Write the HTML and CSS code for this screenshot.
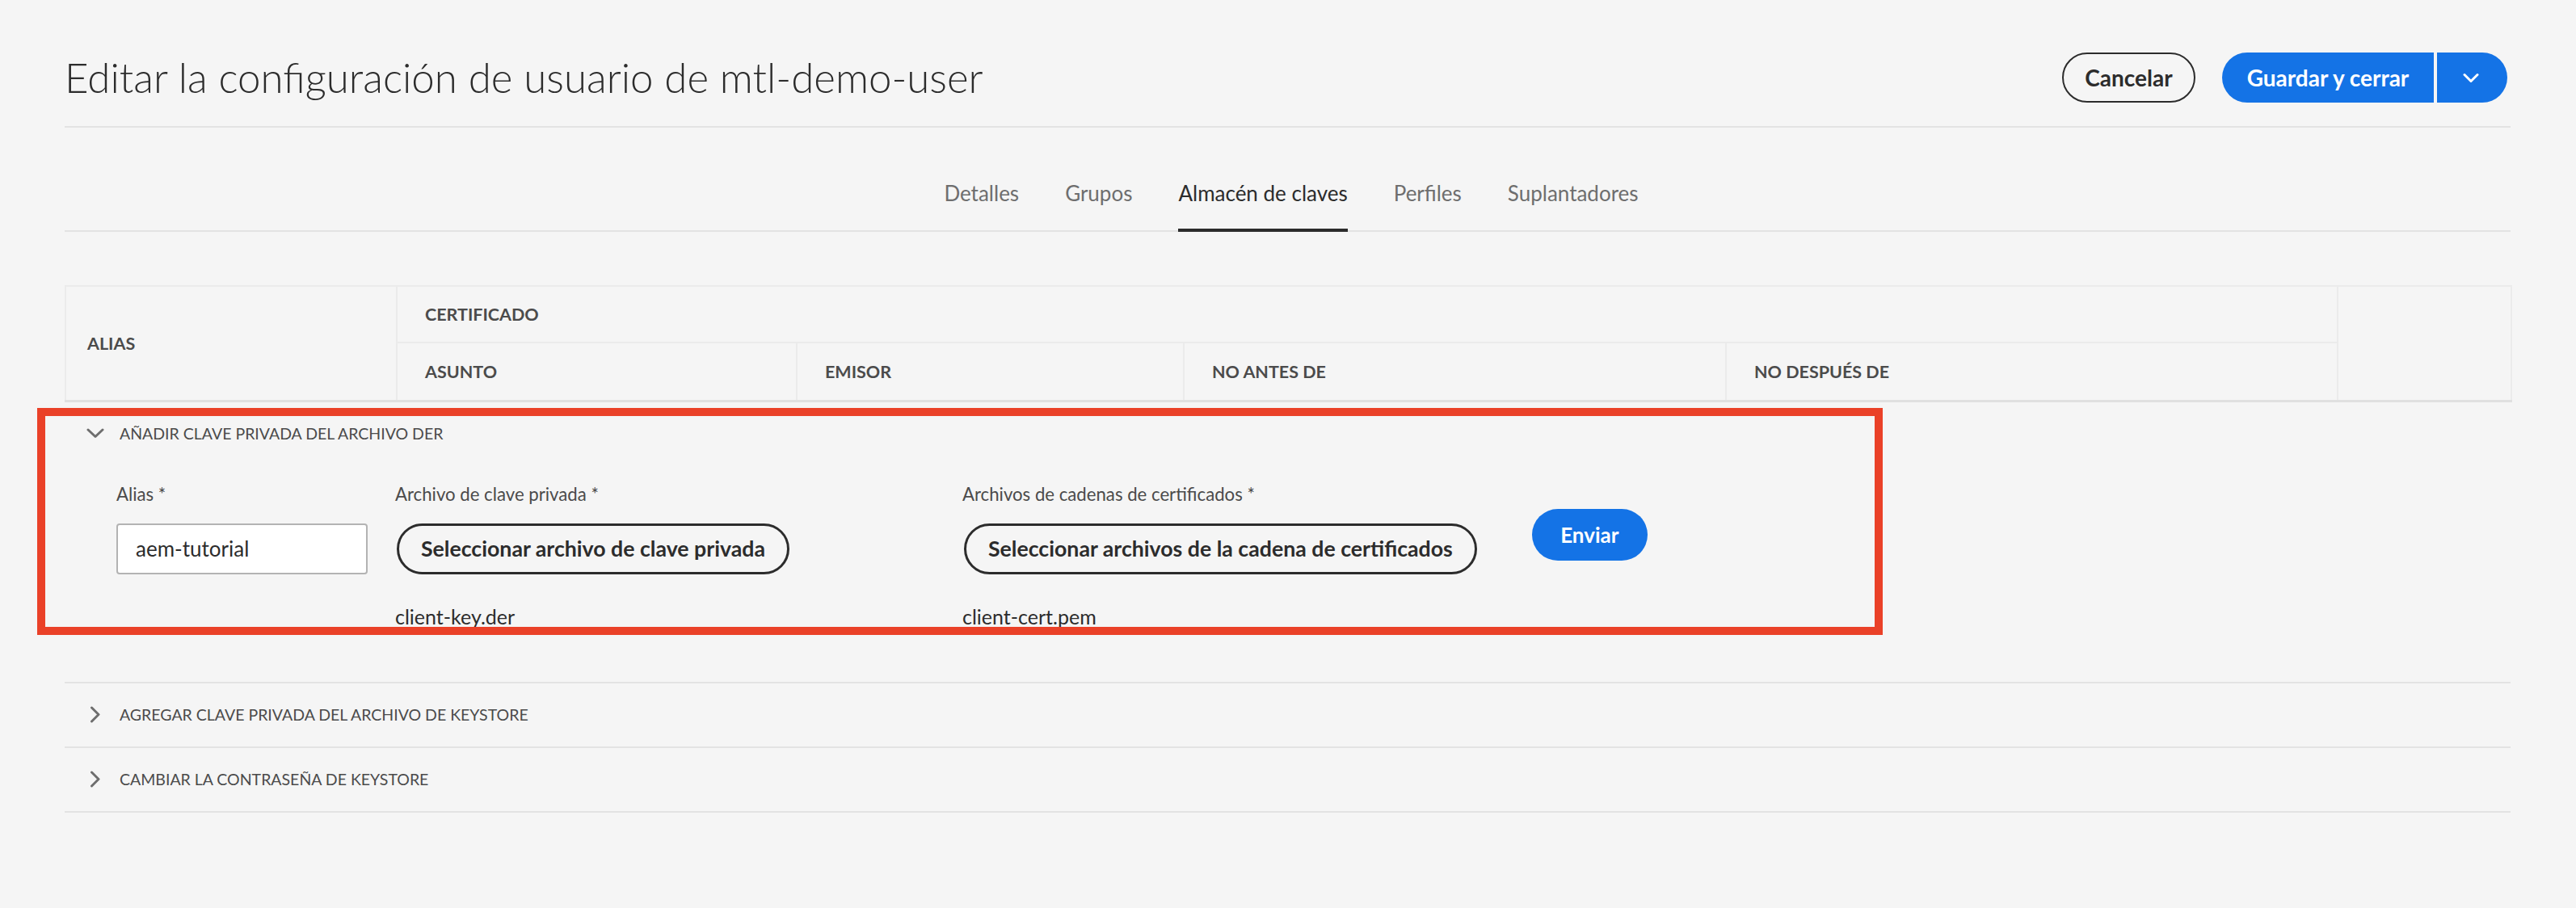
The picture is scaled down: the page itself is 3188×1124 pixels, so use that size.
FILE: index.html
```html
<!DOCTYPE html>
<html lang="es">
<head>
<meta charset="utf-8">
<title>Editar la configuración de usuario de mtl-demo-user</title>
<link rel="stylesheet" href="styles.css">
</head>
<body>
<div class="page">
  <header class="header">
    <h1 class="title">Editar la configuración de usuario de mtl-demo-user</h1>
    <div class="actions">
      <button class="btn btn-outline" type="button">Cancelar</button>
      <div class="split">
        <button class="btn btn-primary split-main" type="button">Guardar y cerrar</button>
        <button class="btn btn-primary split-toggle" type="button" aria-label="Más opciones">
          <svg width="20" height="13" viewBox="0 0 20 13"><path d="M2 2.5 L10 10.5 L18 2.5" fill="none" stroke="#fff" stroke-width="3" stroke-linecap="round" stroke-linejoin="round"/></svg>
        </button>
      </div>
    </div>
  </header>

  <nav class="tabs">
    <a class="tab">Detalles</a>
    <a class="tab">Grupos</a>
    <a class="tab active">Almacén de claves</a>
    <a class="tab">Perfiles</a>
    <a class="tab">Suplantadores</a>
  </nav>

  <table class="keys">
    <colgroup>
      <col class="c-alias">
      <col class="c-asunto">
      <col class="c-emisor">
      <col class="c-antes">
      <col class="c-despues">
      <col class="c-extra">
    </colgroup>
    <thead>
      <tr class="r1">
        <th rowspan="2" class="th-alias">ALIAS</th>
        <th colspan="4">CERTIFICADO</th>
        <th rowspan="2"></th>
      </tr>
      <tr class="r2">
        <th>ASUNTO</th>
        <th>EMISOR</th>
        <th>NO ANTES DE</th>
        <th>NO DESPUÉS DE</th>
      </tr>
    </thead>
  </table>

  <section class="acc acc-open">
    <div class="acc-head">
      <span class="chev">
        <svg width="22" height="13" viewBox="0 0 22 13"><path d="M2 2 L11 10.5 L20 2" fill="none" stroke="#6e6e6e" stroke-width="3" stroke-linecap="round" stroke-linejoin="round"/></svg>
      </span>
      <span class="acc-title">AÑADIR CLAVE PRIVADA DEL ARCHIVO DER</span>
    </div>
    <div class="form">
      <div class="field f-alias">
        <label class="label">Alias *</label>
        <div class="input">aem-tutorial</div>
      </div>
      <div class="field f-key">
        <label class="label">Archivo de clave privada *</label>
        <button class="file-btn" type="button">Seleccionar archivo de clave privada</button>
        <div class="filename">client-key.der</div>
      </div>
      <div class="field f-chain">
        <label class="label">Archivos de cadenas de certificados *</label>
        <button class="file-btn" type="button">Seleccionar archivos de la cadena de certificados</button>
        <div class="filename">client-cert.pem</div>
      </div>
      <button class="btn btn-primary submit" type="button">Enviar</button>
    </div>
    <div class="annot"></div>
  </section>

  <section class="acc">
    <div class="acc-head">
      <span class="chev">
        <svg width="14" height="21" viewBox="0 0 14 21"><path d="M2.5 2 L11 10.5 L2.5 19" fill="none" stroke="#6e6e6e" stroke-width="3" stroke-linecap="round" stroke-linejoin="round"/></svg>
      </span>
      <span class="acc-title">AGREGAR CLAVE PRIVADA DEL ARCHIVO DE KEYSTORE</span>
    </div>
  </section>

  <section class="acc">
    <div class="acc-head">
      <span class="chev">
        <svg width="14" height="21" viewBox="0 0 14 21"><path d="M2.5 2 L11 10.5 L2.5 19" fill="none" stroke="#6e6e6e" stroke-width="3" stroke-linecap="round" stroke-linejoin="round"/></svg>
      </span>
      <span class="acc-title">CAMBIAR LA CONTRASEÑA DE KEYSTORE</span>
    </div>
  </section>
</div>
</body>
</html>
```

FILE: styles.css
```css
* { box-sizing: border-box; }

html, body {
  margin: 0;
  padding: 0;
}

body {
  background: #f5f5f5;
  font-family: Lato, "Open Sans", sans-serif;
  color: #2c2c2c;
  width: 3188px;
}

.page {
  padding: 0 81px 60px 80px;
}

/* Header */
.header {
  display: flex;
  align-items: center;
  justify-content: space-between;
  padding: 65px 4px 29px 0;
  border-bottom: 2px solid #e3e3e3;
}

.title {
  margin: 0;
  font-weight: 300;
  font-size: 51px;
  line-height: 62px;
  color: #2c2c2c;
}

.actions {
  display: flex;
  align-items: center;
  gap: 33px;
}

.btn {
  font-family: inherit;
  font-weight: 700;
  font-size: 28px;
  height: 62px;
  border-radius: 31px;
  display: inline-flex;
  align-items: center;
  justify-content: center;
  cursor: pointer;
  margin: 0;
}

.btn-outline {
  background: transparent;
  border: 2px solid #2c2c2c;
  color: #2c2c2c;
  width: 165px;
  padding: 0;
}

.btn-primary {
  background: #1473e6;
  border: none;
  color: #fff;
}

.split {
  display: flex;
  gap: 4px;
}

.split-main {
  border-radius: 31px 0 0 31px;
  width: 262px;
  padding: 0;
}

.split-toggle {
  border-radius: 0 31px 31px 0;
  width: 87px;
  padding: 0 4px 0 0;
}

/* Tabs */
.tabs {
  display: flex;
  justify-content: center;
  align-items: flex-end;
  gap: 57px;
  height: 129px;
  padding-left: 9px;
  border-bottom: 2px solid #e3e3e3;
}

.tab {
  font-size: 26px;
  line-height: 40px;
  color: #6e6e6e;
  padding-bottom: 24px;
  border-bottom: 4px solid transparent;
  margin-bottom: -2px;
}

.tab.active {
  color: #2c2c2c;
  border-bottom-color: #2c2c2c;
}

/* Table */
.keys {
  width: 100%;
  border-collapse: collapse;
  table-layout: fixed;
  margin-top: 66px;
  border-bottom: 3px solid #e0e0e0;
}

.c-alias { width: 410px; }
.c-asunto { width: 495px; }
.c-emisor { width: 479px; }
.c-antes { width: 671px; }
.c-despues { width: 757px; }
.c-extra { width: 215px; }

.keys th {
  border: 2px solid #ebebeb;
  text-align: left;
  font-size: 21.5px;
  font-weight: 700;
  color: #4b4b4b;
  padding: 0 0 0 34px;
  vertical-align: middle;
}

.keys .r1 th { height: 70px; }
.keys .r2 th { height: 72px; }
.keys th.th-alias { padding-left: 26px; }

/* Accordion */
.acc {
  position: relative;
  border-bottom: 2px solid #e3e3e3;
}

.acc-head {
  display: flex;
  align-items: center;
  height: 78px;
  padding-left: 27px;
  gap: 19px;
}

.chev {
  width: 22px;
  display: flex;
  justify-content: center;
  align-items: center;
}

.chev svg { display: block; }

.acc-title {
  font-size: 19.5px;
  color: #4b4b4b;
}

/* Form */
.form {
  display: flex;
  align-items: flex-start;
  padding: 24px 0 66px 64px;
}

.field {
  display: flex;
  flex-direction: column;
  align-items: flex-start;
}

.f-alias { width: 311px; margin-right: 34px; }
.f-key { width: 702px; }

.label {
  font-size: 22.2px;
  line-height: 24px;
  color: #4b4b4b;
  margin-bottom: 24px;
}

.input {
  width: 311px;
  height: 63px;
  border: 2px solid #b3b3b3;
  border-radius: 4px;
  background: #fff;
  font-size: 26px;
  padding: 0 22px;
  display: flex;
  align-items: center;
  color: #2c2c2c;
}

.file-btn {
  height: 63px;
  border: 3px solid #2c2c2c;
  border-radius: 32px;
  padding: 0 27px;
  background: transparent;
  font-family: inherit;
  font-weight: 700;
  font-size: 26.7px;
  color: #2c2c2c;
  cursor: pointer;
  margin-left: 2px;
}

.filename {
  font-size: 25px;
  line-height: 30px;
  margin-top: 37px;
  color: #2c2c2c;
}

.submit {
  margin-top: 30px;
  margin-left: 68px;
  height: 64px;
  width: 143px;
  border-radius: 32px;
  font-size: 26px;
}

/* Annotation highlight */
.annot {
  position: absolute;
  top: 7px;
  left: -34px;
  width: 2284px;
  height: 281px;
  border: 10px solid #ea4128;
  pointer-events: none;
}
```
